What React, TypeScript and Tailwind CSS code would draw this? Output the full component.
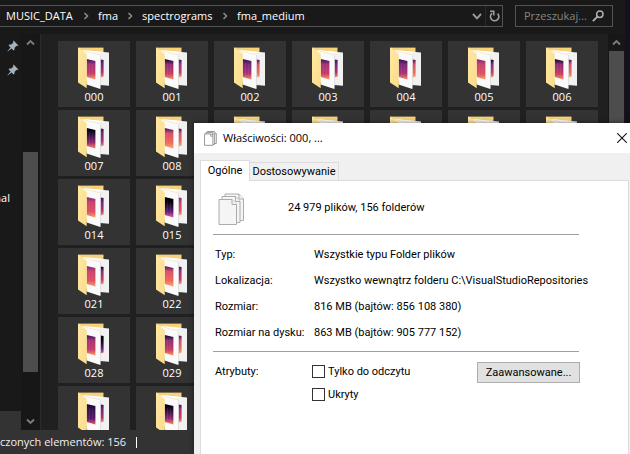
import React from "react";

type Palette = [string, string, string, string];

const violet: Palette = ["#3c1858", "#762878", "#a8347a", "#f07a5c"];
const magenta: Palette = ["#4a1860", "#a03478", "#c43c6c", "#fb8a5c"];
const rose: Palette = ["#8c2c7a", "#c8446c", "#dd5066", "#fb8f62"];
const coral: Palette = ["#5a1e66", "#d8506a", "#ef6a5c", "#fb9a64"];
const night: Palette = ["#020106", "#1d0c34", "#8c2c7a", "#f5735c"];
const black: Palette = ["#020106", "#050209", "#5a2080", "#d8489a"];
const indigo: Palette = ["#1a0b30", "#34124f", "#54196c", "#d8486a"];
const dusk: Palette = ["#1c0c30", "#8a2e78", "#c43c66", "#f8805c"];

// Spectrogram colours of each folder preview: front sheet, back sheet.
const previews: Record<number, [Palette, Palette]> = {
  0: [magenta, violet],
  1: [dusk, magenta],
  2: [violet, coral],
  3: [magenta, violet],
  4: [violet, coral],
  5: [rose, dusk],
  6: [dusk, coral],
  7: [night, violet],
  8: [coral, coral],
  14: [rose, violet],
  15: [black, rose],
  21: [rose, dusk],
  22: [coral, magenta],
  28: [magenta, black],
  29: [dusk, coral],
  35: [indigo, violet],
  36: [night, magenta],
};

function Gradient({ id, colors }: { id: string; colors: Palette }) {
  return (
    <linearGradient id={id} x1="0" y1="0" x2="0" y2="1">
      <stop offset="0.04" stopColor={colors[0]} />
      <stop offset="0.26" stopColor={colors[1]} />
      <stop offset="0.72" stopColor={colors[2]} />
      <stop offset="0.95" stopColor={colors[3]} />
    </linearGradient>
  );
}

function FolderIcon({ index }: { index: number }) {
  const [front, back] = previews[index] ?? [magenta, violet];
  return (
    <svg width="32" height="42" viewBox="0 0 32 42" aria-hidden="true" className="block">
      <defs>
        <Gradient id={`front-${index}`} colors={front} />
        <Gradient id={`back-${index}`} colors={back} />
        <linearGradient id={`flap-${index}`} x1="0" y1="0" x2="1" y2="1">
          <stop offset="0" stopColor="#ffe8a6" />
          <stop offset="1" stopColor="#fbdc86" />
        </linearGradient>
      </defs>
      <path d="M0 .6H25.5V12H0Z" fill="#f6d27a" />
      <path d="M4 3 31 5.4V38.8L22 38V8Z" fill="#f1f1f1" />
      <path d="M4 3 25.5 5 20 6.6Z" fill="#ffffff" />
      <path d="M22.6 12.6 25.6 13V29.6L22.6 30.4Z" fill={`url(#back-${index})`} />
      <path d="M4 3.2 22.3 8.2V42L8.6 37.6Z" fill="#fafafa" />
      <path d="M22.5 8.2V41.6" stroke="#cfcfcf" strokeWidth="0.5" />
      <path d="M8.7 12 17.4 14V32.4L8.7 30Z" fill={`url(#front-${index})`} />
      <path d="M11.5 16V30M14.5 17V31" stroke="#ff8a8a" strokeOpacity="0.18" strokeWidth="0.7" />
      <path d="M0 .6 8.7 7V41.2L0 35.6Z" fill={`url(#flap-${index})`} />
    </svg>
  );
}

function Tile({ index, caption }: { index: number; caption: boolean }) {
  return (
    <li className="flex h-[66px] flex-col items-center bg-[#333333] pt-[6px]">
      <div className="ml-[-1px]">
        <FolderIcon index={index} />
      </div>
      {caption && <span className="text-[11px] leading-[16px] text-white">{String(index).padStart(3, "0")}</span>}
    </li>
  );
}

function Chevron() {
  return (
    <svg width="23" height="10" viewBox="0 0 23 10" fill="none" aria-hidden="true" className="shrink-0">
      <path d="M9.5 2 12.5 5 9.5 8" stroke="#8a8a8a" strokeWidth="1.6" />
    </svg>
  );
}

function Arrow({ down = false }: { down?: boolean }) {
  return (
    <svg width="9" height="7" viewBox="0 0 9 7" fill="none" aria-hidden="true">
      <path d={down ? "M1 1.5 4.5 5 8 1.5" : "M1 5.5 4.5 2 8 5.5"} stroke="#7c7c7c" strokeWidth="1.9" />
    </svg>
  );
}

function Pin() {
  return (
    <svg width="12" height="12" viewBox="0 0 12 12" aria-hidden="true">
      <path
        d="M6.6.6 11.4 5.4 10.2 6 9.6 5.8 7.6 7.8 7.4 10 6.6 10.4 4.6 8.4 .6 11.6.4 11.2 3.6 7.4 1.6 5.4 2.2 4.6 4.4 4.5 6.3 2.5 6.1 1.4Z"
        fill="#a3b4c0"
      />
    </svg>
  );
}

function DocumentsIcon({ size }: { size: "small" | "large" }) {
  const large = size === "large";
  return (
    <svg
      width={large ? 27 : 13}
      height={large ? 33 : 15}
      viewBox="0 0 27 33"
      preserveAspectRatio="none"
      aria-hidden="true"
    >
      <g
        fill={large ? "#f5f5f5" : "#ffffff"}
        stroke={large ? "#acacac" : "#8c8c8c"}
        strokeWidth={large ? 1 : 1.9}
      >
        <path d="M7 1H21L25.5 6V27.5H7Z" />
        <path d="M21 1V6H25.5" />
        <path d="M4 3.5H17.5L22 8.5V29.5H4Z" />
        <path d="M17.5 3.5V8.5H22" />
        <path d="M1 6.5H14L18.5 11.5V31.5H1Z" />
        <path d="M14 6.5V11.5H18.5" />
      </g>
    </svg>
  );
}

function AddressBar() {
  return (
    <header className="flex h-[34px] shrink-0 items-start gap-[12px] bg-[#191919] pt-[5px] pr-[12px]">
      <nav
        aria-label="Ścieżka"
        className="flex h-[22px] min-w-0 flex-1 items-center border border-l-0 border-[#535353] pl-[6px] text-[11px] leading-[16px] text-white"
      >
        <a href="#music" className="w-[69px]">MUSIC_DATA</a>
        <Chevron />
        <a href="#fma" className="w-[21px]">fma</a>
        <Chevron />
        <a href="#spectrograms" className="w-[72px]">spectrograms</a>
        <Chevron />
        <a href="#medium" className="flex-1">fma_medium</a>
        <button aria-label="Historia" className="flex h-full w-[16px] items-center justify-center">
          <svg width="10" height="7" viewBox="0 0 10 7" fill="none">
            <path d="M1 1 5 5.3 9 1" stroke="#9a9a9a" strokeWidth="1.9" />
          </svg>
        </button>
        <button aria-label="Odśwież" className="flex h-full w-[17px] items-center justify-center border-l border-[#2a2a2a]">
          <svg width="11" height="12" viewBox="0 0 11 12" fill="none">
            <path d="M8.6 3.6A4.2 4.2 0 1 1 3.2 3.2" stroke="#a0a0a0" strokeWidth="1.6" />
            <path d="M1 1.3H4.8V5.6" stroke="#a0a0a0" strokeWidth="1.5" />
          </svg>
        </button>
      </nav>
      <label className="flex h-[22px] w-[98px] items-center border border-[#535353] pr-[8px] pl-[8px]">
        <input
          type="text"
          aria-label="Przeszukaj"
          placeholder="Przeszukaj..."
          className="w-full min-w-0 bg-transparent text-[11px] leading-[16px] outline-none placeholder:text-[#858585]"
        />
        <svg width="12" height="12" viewBox="0 0 12 12" fill="none" className="shrink-0">
          <circle cx="7.8" cy="4.2" r="3.2" stroke="#b0b0b0" strokeWidth="1.5" />
          <path d="M5.4 6.6.9 11.1" stroke="#b0b0b0" strokeWidth="1.9" />
        </svg>
      </label>
    </header>
  );
}

function Row({ label, value }: { label: string; value: string }) {
  return (
    <tr className="h-[26px]">
      <th scope="row" className="w-[99px] min-w-[99px] p-0 text-left font-normal">{label}</th>
      <td className="p-0">{value}</td>
    </tr>
  );
}

function PropertiesDialog() {
  return (
    <section
      role="dialog"
      aria-labelledby="dialog-title"
      className="absolute top-[123px] right-0 bottom-0 left-[194px] flex flex-col overflow-hidden bg-[#f0f0f0] font-['Roboto','Open_Sans',sans-serif] text-[11px] leading-[14px] text-black shadow-[0_0_5px_rgba(0,0,0,0.5)]"
    >
      <div className="flex h-[30px] shrink-0 items-center bg-white pr-[3px] pl-[10px]">
        <DocumentsIcon size="small" />
        <h1 id="dialog-title" className="ml-[6px] flex-1 font-['Open_Sans','Noto_Sans',sans-serif] text-[11px] leading-[16px]">
          Właściwości: 000, ...
        </h1>
        <button aria-label="Zamknij">
          <svg width="10" height="10" viewBox="0 0 10 10" fill="none">
            <path d="M.3.3 9.7 9.7M9.7.3.3 9.7" stroke="#111" strokeWidth="1.1" />
          </svg>
        </button>
      </div>
      <div className="flex flex-1 flex-col pt-[7px] pr-[1px] pl-[6px]">
        <div role="tablist" className="flex items-end">
          <button role="tab" aria-selected="true" className="z-10 -mb-px h-[21px] w-[50px] border border-b-0 border-[#dcdcdc] bg-white">
            Ogólne
          </button>
          <button role="tab" aria-selected="false" className="h-[18px] w-[89px] border border-b-0 border-l-0 border-[#dcdcdc] bg-[#f0f0f0]">
            Dostosowywanie
          </button>
        </div>
        <div role="tabpanel" className="flex-1 border border-b-0 border-[#dcdcdc] bg-white pt-[12px] pr-[49px] pl-[12px]">
          <div className="flex h-[41px] items-start pl-[5px]">
            <DocumentsIcon size="large" />
            <p className="ml-[43px] pt-[8px]">24 979 plików, 156 folderów</p>
          </div>
          <hr className="border-[#a0a0a0]" />
          <table className="mt-[7px] ml-[2px] border-collapse whitespace-nowrap">
            <tbody>
              <Row label="Typ:" value="Wszystkie typu Folder plików" />
              <Row label="Lokalizacja:" value="Wszystko wewnątrz folderu C:\VisualStudioRepositories" />
              <Row label="Rozmiar:" value="816 MB (bajtów: 856 108 380)" />
              <Row label="Rozmiar na dysku:" value="863 MB (bajtów: 905 777 152)" />
            </tbody>
          </table>
          <hr className="mt-[5px] border-[#a0a0a0]" />
          <fieldset className="mr-[-1px] flex items-start pt-[10px] pl-[2px]">
            <span className="w-[97px] pt-[3px]">Atrybuty:</span>
            <div className="flex flex-1 flex-col gap-[7px] pt-[2px]">
              <label className="flex h-[16px] items-start gap-[3px]">
                <input type="checkbox" className="mt-px size-[13px] appearance-none border border-[#333] bg-white" />
                <span className="leading-[16px]">Tylko do odczytu</span>
              </label>
              <label className="flex h-[16px] items-start gap-[3px]">
                <input type="checkbox" className="mt-px size-[13px] appearance-none border border-[#333] bg-white" />
                <span className="leading-[16px]">Ukryty</span>
              </label>
            </div>
            <button className="h-[21px] w-[103px] border border-[#adadad] bg-[#e1e1e1]">Zaawansowane...</button>
          </fieldset>
        </div>
      </div>
    </section>
  );
}

const COLUMNS = 7;

export default function App() {
  const tiles = Array.from({ length: 42 }, (_, i) => i);
  return (
    <div className="relative flex h-screen overflow-hidden bg-[#14101f] font-['Open_Sans','Noto_Sans',sans-serif]">
      <main className="mr-[5px] flex min-w-0 flex-1 flex-col">
        <AddressBar />
        <div className="flex min-h-0 flex-1 bg-[#202020]">
          <aside className="flex w-[41px] shrink-0 border-r border-[#2b2b2b] bg-[#191919]">
            <div className="flex w-[21px] flex-col">
              <div className="flex flex-col items-end gap-[12px] pt-[6px] pr-[2px]">
                <Pin />
                <Pin />
              </div>
              <div className="mt-[114px] flex w-[10px] justify-end overflow-hidden text-[11px] leading-[16px] text-white">nal</div>
              <div className="mt-auto h-[19px] bg-[#333333]" />
            </div>
            <div className="flex w-[19px] flex-col items-center bg-[#171717]">
              <div className="flex h-[17px] items-center">
                <Arrow />
              </div>
              <div className="mt-[101px] h-[220px] w-[15px] bg-[#4d4d4d]" />
              <div className="mt-auto flex h-[17px] items-center">
                <Arrow down />
              </div>
            </div>
          </aside>
          <ul className="grid min-w-0 flex-1 auto-rows-[66px] grid-cols-[repeat(auto-fill,72px)] gap-x-[6px] gap-y-[3px] overflow-hidden pt-[7px] pl-[17px]">
            {tiles.map((i) => {
              const row = Math.floor(i / COLUMNS);
              // The dialog covers everything right of the second column below the first row.
              const uncovered = row === 0 || i % COLUMNS < 2;
              return <Tile key={i} index={i} caption={uncovered && row < 5} />;
            })}
          </ul>
          <div className="flex w-[17px] shrink-0 flex-col items-center bg-[#171717]">
            <div className="flex h-[17px] items-center">
              <Arrow />
            </div>
            <div className="w-[15px] flex-1 bg-[#4d4d4d]" />
          </div>
        </div>
        <footer className="flex h-[24px] shrink-0 items-center gap-[10px] bg-[#333333] text-[11px] leading-[16px] text-[#f0f0f0]">
          <span>czonych elementów: 156</span>
          <span className="h-[11px] w-px bg-white" />
        </footer>
      </main>
      <PropertiesDialog />
    </div>
  );
}
